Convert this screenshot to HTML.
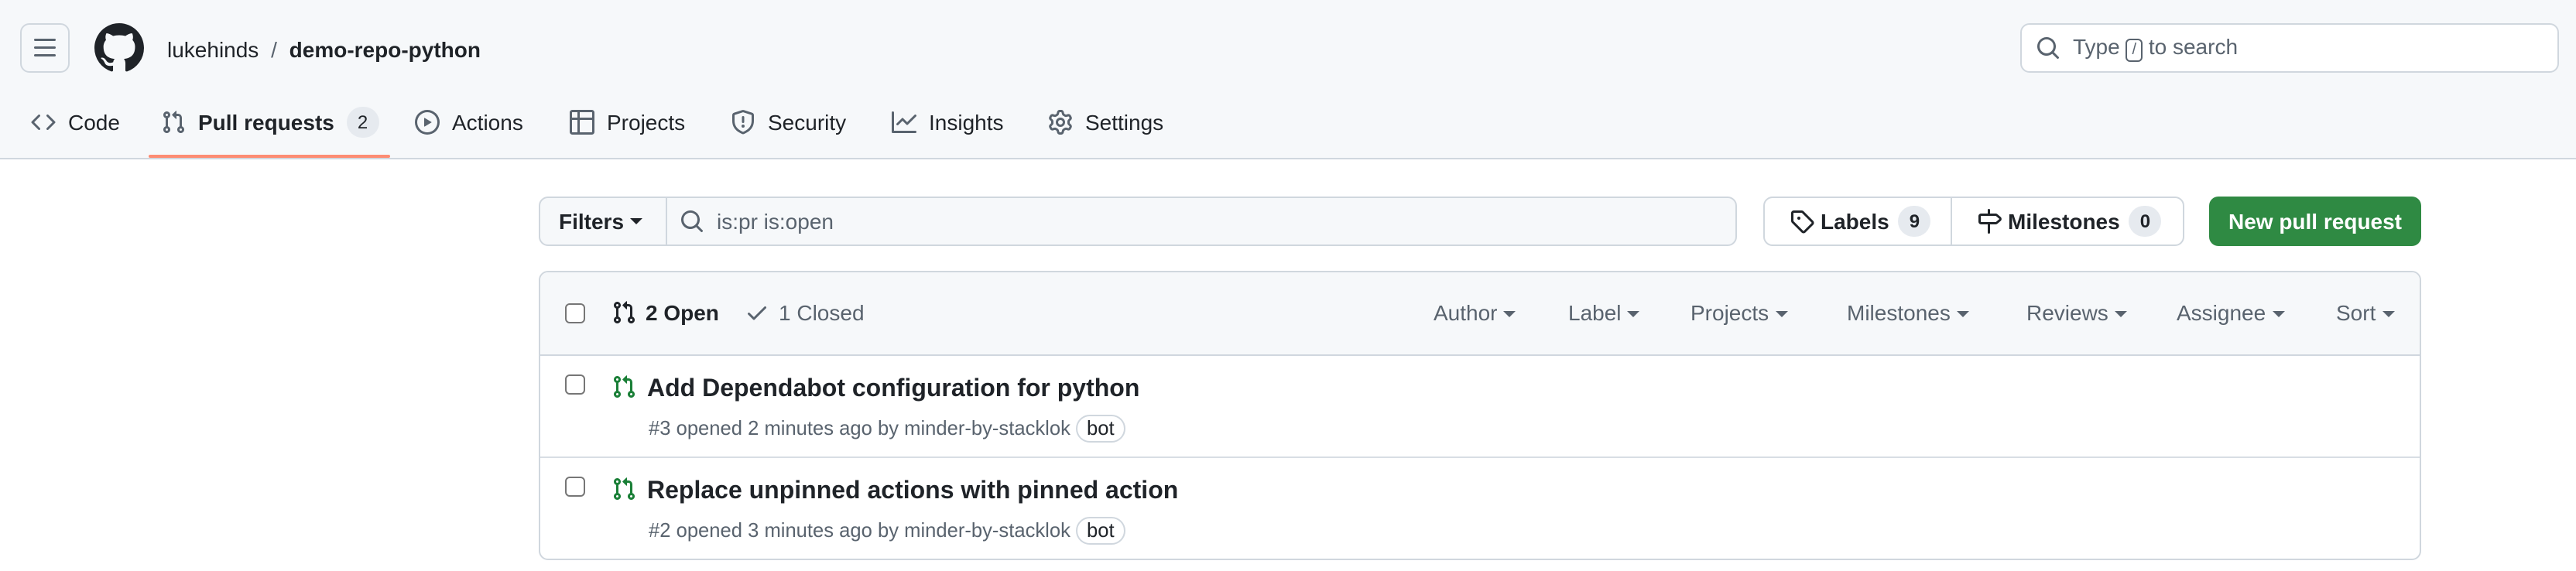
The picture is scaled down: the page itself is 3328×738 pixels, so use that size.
<!DOCTYPE html>
<html><head><meta charset="utf-8">
<style>
*{box-sizing:border-box;margin:0;padding:0}
html,body{width:3328px;height:738px;overflow:hidden;background:#fff}
#w{width:1664px;height:369px;transform:scale(2);transform-origin:0 0;position:relative;font-family:"Liberation Sans",sans-serif;color:#1f2328;font-size:14px}
.a{position:absolute}
.hdr{left:0;top:0;width:1664px;height:103px;background:#f6f8fa;border-bottom:1px solid #d0d7de}
svg{display:block}
.nav{top:67px;height:24px;display:flex;align-items:center;gap:8px;color:#1f2328;font-size:14px}
.ic{fill:#59636e}
.cnt{background:#e6eaef;border-radius:12px;padding:1px 7px;font-size:12px;line-height:18px;color:#1f2328}
.fl{display:flex;align-items:center}
.gray{color:#59636e}
.caret{display:inline-block;width:0;height:0;border-left:4px solid transparent;border-right:4px solid transparent;border-top:4px solid currentColor;margin-left:4px;vertical-align:middle}
.cb{width:13px;height:13px;border:1px solid #767676;border-radius:3px;background:#fff}
.meta{left:70px;top:38px;font-size:12.8px;line-height:18px}
</style></head><body><div id="w">
<div class="a hdr"></div>
<div class="a" style="left:13px;top:15px;width:32px;height:32px;border:1px solid #d0d7de;border-radius:6px;background:#f6f8fa">
<svg width="16" height="16" viewBox="0 0 16 16" style="margin:7px"><path class="ic" d="M1 2.75A.75.75 0 0 1 1.75 2h12.5a.75.75 0 0 1 0 1.5H1.75A.75.75 0 0 1 1 2.75Zm0 5A.75.75 0 0 1 1.75 7h12.5a.75.75 0 0 1 0 1.5H1.75A.75.75 0 0 1 1 7.75ZM1.75 12h12.5a.75.75 0 0 1 0 1.5H1.75a.75.75 0 0 1 0-1.5Z"/></svg></div>
<svg class="a" style="left:61px;top:15px" width="32" height="32" viewBox="0 0 16 16"><path fill="#1f2328" d="M8 0c4.42 0 8 3.58 8 8a8.013 8.013 0 0 1-5.45 7.59c-.4.08-.55-.17-.55-.38 0-.27.01-1.130.01-2.2 0-.75-.25-1.23-.54-1.48 1.78-.2 3.65-.88 3.650-3.95 0-.88-.31-1.59-.82-2.15.08-.2.36-1.020-.08-2.12 0 0-.67-.22-2.2.82-.64-.18-1.32-.27-2-.27-.68 0-1.36.09-2 .27-1.53-1.03-2.2-.82-2.2-.82-.44 1.1-.16 1.92-.08 2.12-.51.56-.82 1.28-.82 2.15 0 3.06 1.86 3.75 3.64 3.95-.23.2-.44.55-.51 1.07-.46.21-1.61.55-2.33-.66-.15-.24-.6-.83-1.23-.82-.67.01-.27.38.01.53.34.19.73.9.82 1.13.16.45.68 1.31 2.69.94 0 .67.01 1.3.01 1.49 0 .21-.15.45-.55.38A7.995 7.995 0 0 1 0 8c0-4.42 3.58-8 8-8Z"/></svg>
<div class="a" style="left:108px;top:22px;font-size:14px;line-height:20px">lukehinds <span style="color:#59636e;margin:0 4px">/</span> <b>demo-repo-python</b></div>
<div class="a fl" style="left:1305px;top:15px;width:348px;height:32px;border:1px solid #d0d7de;border-radius:6px;background:#fff;padding-left:9px;color:#59636e">
<svg width="16" height="16" viewBox="0 0 16 16"><path class="ic" d="M10.68 11.74a6 6 0 0 1-7.922-8.982 6 6 0 0 1 8.982 7.922l3.04 3.04a.749.749 0 1 1-1.06 1.06ZM11.5 7a4.499 4.499 0 1 0-8.997 0A4.499 4.499 0 0 0 11.5 7Z"/></svg>
<span style="margin-left:8px">Type <span style="display:inline-block;border:1px solid #59636e;border-radius:3px;font-size:10px;padding:0 3px;line-height:13px">/</span> to search</span></div>
<div class="a nav" style="left:20px"><svg width="16" height="16" viewBox="0 0 16 16"><path class="ic" d="m11.28 3.22 4.25 4.25a.75.75 0 0 1 0 1.06l-4.25 4.25a.749.749 0 0 1-1.275-.326.749.749 0 0 1 .215-.734L13.94 8l-3.72-3.72a.749.749 0 0 1 .326-1.275.749.749 0 0 1 .734.215Zm-6.56 0a.751.751 0 0 1 1.042.018.751.751 0 0 1 .018 1.042L2.06 8l3.72 3.720a.749.749 0 0 1-.326 1.275.749.749 0 0 1-.734-.215L.47 8.53a.75.75 0 0 1 0-1.06Z"/></svg>Code</div>
<div class="a nav" style="left:104px"><svg width="16" height="16" viewBox="0 0 16 16"><path class="ic" d="M1.5 3.25a2.25 2.25 0 1 1 3 2.122v5.256a2.251 2.251 0 1 1-1.5 0V5.372A2.25 2.25 0 0 1 1.5 3.25Zm5.677-.177L9.573.677A.25.25 0 0 1 10 .854V2.5h1A2.5 2.5 0 0 1 13.5 5v5.628a2.251 2.251 0 1 1-1.5 0V5a1 1 0 0 0-1-1h-1v1.646a.25.25 0 0 1-.427.177L7.177 3.427a.25.25 0 0 1 0-.354ZM3.75 2.5a.75.75 0 1 0 0 1.5.75.75 0 0 0 0-1.5Zm0 9.5a.75.75 0 1 0 0 1.5.75.75 0 0 0 0-1.5Zm8.25.75a.75.75 0 1 0 1.5 0 .75.75 0 0 0-1.5 0Z"/></svg><b>Pull requests</b><span class="cnt">2</span></div>
<div class="a" style="left:96px;top:100px;width:156px;height:2px;background:#fd8c73;border-radius:2px"></div>
<div class="a nav" style="left:268px"><svg width="16" height="16" viewBox="0 0 16 16"><path class="ic" d="M8 0a8 8 0 1 1 0 16A8 8 0 0 1 8 0ZM1.5 8a6.5 6.5 0 1 0 13 0 6.5 6.5 0 0 0-13 0Zm4.879-2.773 4.264 2.559a.25.25 0 0 1 0 .428l-4.264 2.559A.25.25 0 0 1 6 10.559V5.442a.25.25 0 0 1 .379-.215Z"/></svg>Actions</div>
<div class="a nav" style="left:368px"><svg width="16" height="16" viewBox="0 0 16 16"><path class="ic" d="M0 1.75C0 .784.784 0 1.75 0h12.5C15.216 0 16 .784 16 1.75v12.5A1.75 1.75 0 0 1 14.25 16H1.75A1.75 1.75 0 0 1 0 14.25ZM6.5 6.5v8h7.75a.25.25 0 0 0 .25-.25V6.5Zm8-1.5V1.75a.25.25 0 0 0-.25-.25H6.5V5Zm-13 1.5v7.75c0 .138.112.25.25.25H5v-8ZM5 5V1.5H1.75a.25.25 0 0 0-.25.25V5Z"/></svg>Projects</div>
<div class="a nav" style="left:472px"><svg width="16" height="16" viewBox="0 0 16 16"><path class="ic" d="M7.467.133a1.748 1.748 0 0 1 1.066 0l5.25 1.68A1.75 1.75 0 0 1 15 3.48V7c0 1.566-.32 3.182-1.303 4.682-.983 1.498-2.585 2.813-5.032 3.855a1.697 1.697 0 0 1-1.33 0c-2.447-1.042-4.049-2.357-5.032-3.855C1.32 10.182 1 8.566 1 7V3.48a1.755 1.755 0 0 1 1.217-1.667Zm.61 1.429a.25.25 0 0 0-.153 0l-5.250 1.68a.25.25 0 0 0-.174.238V7c0 1.358.275 2.666 1.057 3.86.784 1.194 2.121 2.34 4.366 3.297a.196.196 0 0 0 .154 0c2.245-.956 3.582-2.104 4.366-3.298C13.225 9.666 13.5 8.36 13.5 7V3.48a.251.251 0 0 0-.174-.237l-5.25-1.68ZM8.75 4.75v3a.75.75 0 0 1-1.5 0v-3a.75.75 0 0 1 1.5 0ZM9 10.5a1 1 0 1 1-2 0 1 1 0 0 1 2 0Z"/></svg>Security</div>
<div class="a nav" style="left:576px"><svg width="16" height="16" viewBox="0 0 16 16"><path class="ic" d="M1.5 1.75V13.5h13.75a.75.75 0 0 1 0 1.5H.75a.75.75 0 0 1-.75-.75V1.75a.75.75 0 0 1 1.5 0Zm14.28 2.53-5.25 5.25a.75.75 0 0 1-1.06 0L7 7.06 4.28 9.78a.751.751 0 0 1-1.042-.018.751.751 0 0 1-.018-1.042l3.25-3.25a.75.75 0 0 1 1.06 0L10 7.94l4.72-4.72a.751.751 0 0 1 1.042.018.751.751 0 0 1 .018 1.042Z"/></svg>Insights</div>
<div class="a nav" style="left:677px"><svg width="16" height="16" viewBox="0 0 16 16"><path class="ic" d="M8 0a8.2 8.2 0 0 1 .701.031C9.444.095 9.99.645 10.16 1.29l.288 1.107c.018.066.079.158.212.224.231.114.454.243.668.386.123.082.233.09.299.071l1.103-.303c.644-.176 1.392.021 1.82.63.27.385.506.792.704 1.218.315.675.111 1.422-.364 1.891l-.814.806c-.049.048-.098.147-.088.294.016.257.016.515 0 .772-.01.147.038.246.088.294l.814.806c.475.469.679 1.216.364 1.891a7.977 7.977 0 0 1-.704 1.217c-.428.61-1.176.807-1.82.63l-1.102-.302c-.067-.019-.177-.011-.3.071a5.909 5.909 0 0 1-.668.386c-.133.066-.194.158-.211.224l-.29 1.106c-.168.646-.715 1.196-1.458 1.26a8.006 8.006 0 0 1-1.402 0c-.743-.064-1.289-.614-1.458-1.26l-.289-1.106c-.018-.066-.079-.158-.212-.224a5.738 5.738 0 0 1-.668-.386c-.123-.082-.233-.09-.299-.071l-1.103.303c-.644.176-1.392-.021-1.82-.63a8.12 8.12 0 0 1-.704-1.218c-.315-.675-.111-1.422.363-1.891l.815-.806c.05-.048.098-.147.088-.294a6.214 6.214 0 0 1 0-.772c.01-.147-.038-.246-.088-.294l-.815-.806C.635 6.045.431 5.298.746 4.623a7.92 7.92 0 0 1 .704-1.217c.428-.61 1.176-.807 1.82-.63l1.102.302c.067.019.177.011.3-.071.214-.143.437-.272.668-.386.133-.066.194-.158.211-.224l.29-1.106C6.009.645 6.556.095 7.299.03 7.53.01 7.764 0 8 0Zm-.571 1.525c-.036.003-.108.036-.137.146l-.289 1.105c-.147.561-.549.967-.998 1.189-.173.086-.34.183-.5.29-.417.278-.97.423-1.529.27l-1.103-.303c-.109-.03-.175.016-.195.045-.22.312-.412.644-.573.99-.014.031-.021.11.059.19l.815.806c.411.406.562.957.53 1.456a4.709 4.709 0 0 0 0 .582c.032.499-.119 1.05-.53 1.456l-.815.806c-.081.08-.073.159-.059.19.162.346.353.677.573.989.02.03.085.076.195.046l1.102-.303c.56-.153 1.113-.008 1.53.27.161.107.328.204.501.29.447.222.85.629.997 1.189l.289 1.105c.029.109.101.143.137.146a6.6 6.6 0 0 0 1.142 0c.036-.003.108-.036.137-.146l.289-1.105c.147-.561.549-.967.998-1.189.173-.086.34-.183.5-.29.417-.278.97-.423 1.529-.27l1.103.303c.109.029.175-.016.195-.045.22-.313.411-.644.573-.99.014-.031.021-.11-.059-.19l-.815-.806c-.411-.406-.562-.957-.53-1.456a4.709 4.709 0 0 0 0-.582c-.032-.499.119-1.05.53-1.456l.815-.806c.081-.08.073-.159.059-.19a6.464 6.464 0 0 0-.573-.989c-.02-.03-.085-.076-.195-.046l-1.102.303c-.56.153-1.113.008-1.53-.27a4.44 4.44 0 0 0-.501-.29c-.447-.222-.85-.629-.997-1.189l-.289-1.105c-.029-.11-.101-.143-.137-.146a6.6 6.6 0 0 0-1.142 0ZM11 8a3 3 0 1 1-6 0 3 3 0 0 1 6 0ZM9.5 8a1.5 1.5 0 1 0-3.001.001A1.5 1.5 0 0 0 9.5 8Z"/></svg>Settings</div>

<div class="a fl" style="left:348px;top:127px;width:774px;height:32px;border:1px solid #d0d7de;border-radius:6px;background:#f6f8fa">
<div class="fl" style="width:82px;height:100%;border-right:1px solid #d0d7de;padding-left:12px;font-weight:bold;font-size:14px">Filters<span class="caret"></span></div>
<svg width="16" height="16" viewBox="0 0 16 16" style="margin-left:8px"><path class="ic" d="M10.68 11.74a6 6 0 0 1-7.922-8.982 6 6 0 0 1 8.982 7.922l3.04 3.04a.749.749 0 1 1-1.06 1.06ZM11.5 7a4.499 4.499 0 1 0-8.997 0A4.499 4.499 0 0 0 11.5 7Z"/></svg>
<span class="gray" style="margin-left:8px">is:pr is:open</span></div>
<div class="a fl" style="left:1139px;top:127px;width:272px;height:32px;border:1px solid #d0d7de;border-radius:6px;background:#fff;font-weight:bold">
<div class="fl" style="width:121px;height:100%;border-right:1px solid #d0d7de;padding-left:16px;gap:4px"><svg width="16" height="16" viewBox="0 0 16 16"><path fill="#1f2328" d="M1 7.775V2.75C1 1.784 1.784 1 2.75 1h5.025c.464 0 .91.184 1.238.513l6.25 6.25a1.75 1.75 0 0 1 0 2.474l-5.026 5.026a1.75 1.75 0 0 1-2.474 0l-6.25-6.25A1.752 1.752 0 0 1 1 7.775Zm1.5 0c0 .066.026.13.073.177l6.25 6.25a.25.25 0 0 0 .354 0l5.025-5.025a.25.25 0 0 0 0-.354l-6.25-6.25a.25.25 0 0 0-.177-.073H2.75a.25.25 0 0 0-.25.25ZM6 5a1 1 0 1 1 0 2 1 1 0 0 1 0-2Z"/></svg>Labels<span class="cnt" style="margin-left:2px">9</span></div>
<div class="fl" style="padding-left:16px;gap:4px"><svg width="16" height="16" viewBox="0 0 16 16"><path fill="#1f2328" d="M7.75 0a.75.75 0 0 1 .75.75V3h3.634c.414 0 .814.147 1.13.414l2.07 1.75a1.75 1.75 0 0 1 0 2.672l-2.07 1.75a1.75 1.75 0 0 1-1.13.414H8.5v5.25a.75.75 0 0 1-1.5 0V10H2.75A1.75 1.75 0 0 1 1 8.25v-3.5C1 3.784 1.784 3 2.75 3H7V.75A.75.75 0 0 1 7.75 0Zm4.384 8.5a.25.25 0 0 0 .161-.06l2.07-1.75a.248.248 0 0 0 0-.38l-2.07-1.75a.25.25 0 0 0-.161-.06H2.75a.25.25 0 0 0-.25.25v3.5c0 .138.112.25.25.25h9.384Z"/></svg>Milestones<span class="cnt" style="margin-left:2px">0</span></div></div>
<div class="a fl" style="left:1427px;top:127px;width:137px;height:32px;border-radius:6px;color:#fff;font-weight:bold;justify-content:center;background:#2f8a43">New pull request</div>

<div class="a" style="left:348px;top:175px;width:1216px;height:187px;border:1px solid #d0d7de;border-radius:6px;overflow:hidden">
<div class="fl" style="height:54px;background:#f6f8fa;border-bottom:1px solid #d0d7de;position:relative">
<div class="cb a" style="left:16px;top:20px"></div>
<div class="a fl" style="left:46px;top:18px;gap:6px;font-weight:bold"><svg width="16" height="16" viewBox="0 0 16 16"><path fill="#1f2328" d="M1.5 3.25a2.25 2.25 0 1 1 3 2.122v5.256a2.251 2.251 0 1 1-1.5 0V5.372A2.25 2.25 0 0 1 1.5 3.25Zm5.677-.177L9.573.677A.25.25 0 0 1 10 .854V2.5h1A2.5 2.5 0 0 1 13.5 5v5.628a2.251 2.251 0 1 1-1.5 0V5a1 1 0 0 0-1-1h-1v1.646a.25.25 0 0 1-.427.177L7.177 3.427a.25.25 0 0 1 0-.354ZM3.75 2.5a.75.75 0 1 0 0 1.5.75.75 0 0 0 0-1.5Zm0 9.5a.75.75 0 1 0 0 1.5.75.75 0 0 0 0-1.5Zm8.25.75a.75.75 0 1 0 1.5 0 .75.75 0 0 0-1.5 0Z"/></svg>2 Open</div>
<div class="a fl gray" style="left:132px;top:18px;gap:6px"><svg width="16" height="16" viewBox="0 0 16 16"><path class="ic" d="M13.78 4.22a.75.75 0 0 1 0 1.06l-7.25 7.25a.75.75 0 0 1-1.06 0L2.22 9.28a.751.751 0 0 1 .018-1.042.751.751 0 0 1 1.042-.018L6 10.94l6.72-6.72a.75.75 0 0 1 1.06 0Z"/></svg>1 Closed</div>
<div class="a gray" style="left:577px;top:18px">Author<span class="caret"></span></div>
<div class="a gray" style="left:664px;top:18px">Label<span class="caret"></span></div>
<div class="a gray" style="left:743px;top:18px">Projects<span class="caret"></span></div>
<div class="a gray" style="left:844px;top:18px">Milestones<span class="caret"></span></div>
<div class="a gray" style="left:960px;top:18px">Reviews<span class="caret"></span></div>
<div class="a gray" style="left:1057px;top:18px">Assignee<span class="caret"></span></div>
<div class="a gray" style="left:1160px;top:18px">Sort<span class="caret"></span></div>
</div>
<div style="height:66px;border-bottom:1px solid #d8dee4;position:relative">
<div class="cb a" style="left:16px;top:12px"></div>
<svg class="a" style="left:46px;top:12px" width="16" height="16" viewBox="0 0 16 16"><path fill="#1a7f37" d="M1.5 3.25a2.25 2.25 0 1 1 3 2.122v5.256a2.251 2.251 0 1 1-1.5 0V5.372A2.25 2.25 0 0 1 1.5 3.25Zm5.677-.177L9.573.677A.25.25 0 0 1 10 .854V2.5h1A2.5 2.5 0 0 1 13.5 5v5.628a2.251 2.251 0 1 1-1.5 0V5a1 1 0 0 0-1-1h-1v1.646a.25.25 0 0 1-.427.177L7.177 3.427a.25.25 0 0 1 0-.354ZM3.75 2.5a.75.75 0 1 0 0 1.5.75.75 0 0 0 0-1.5Zm0 9.5a.75.75 0 1 0 0 1.5.75.75 0 0 0 0-1.5Zm8.25.75a.75.75 0 1 0 1.5 0 .75.75 0 0 0-1.5 0Z"/></svg>
<div class="a" style="left:69px;top:12px;font-size:16px;font-weight:bold;line-height:20px">Add Dependabot configuration for python</div>
<div class="a gray meta">#3 opened 2 minutes ago by minder-by-stacklok <span style="border:1px solid #d0d7de;border-radius:9px;padding:0 6px;color:#1f2328;display:inline-block;line-height:16px">bot</span></div>
</div>
<div style="height:66px;position:relative">
<div class="cb a" style="left:16px;top:12px"></div>
<svg class="a" style="left:46px;top:12px" width="16" height="16" viewBox="0 0 16 16"><path fill="#1a7f37" d="M1.5 3.25a2.25 2.25 0 1 1 3 2.122v5.256a2.251 2.251 0 1 1-1.5 0V5.372A2.25 2.25 0 0 1 1.5 3.25Zm5.677-.177L9.573.677A.25.25 0 0 1 10 .854V2.5h1A2.5 2.5 0 0 1 13.5 5v5.628a2.251 2.251 0 1 1-1.5 0V5a1 1 0 0 0-1-1h-1v1.646a.25.25 0 0 1-.427.177L7.177 3.427a.25.25 0 0 1 0-.354ZM3.75 2.5a.75.75 0 1 0 0 1.5.75.75 0 0 0 0-1.5Zm0 9.5a.75.75 0 1 0 0 1.5.75.75 0 0 0 0-1.5Zm8.25.75a.75.75 0 1 0 1.5 0 .75.75 0 0 0-1.5 0Z"/></svg>
<div class="a" style="left:69px;top:12px;font-size:16px;font-weight:bold;line-height:20px">Replace unpinned actions with pinned action</div>
<div class="a gray meta">#2 opened 3 minutes ago by minder-by-stacklok <span style="border:1px solid #d0d7de;border-radius:9px;padding:0 6px;color:#1f2328;display:inline-block;line-height:16px">bot</span></div>
</div>
</div>
</div></body></html>
